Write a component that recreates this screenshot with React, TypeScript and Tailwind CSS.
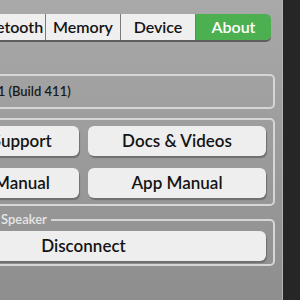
const tabs = ["Bluetooth", "Memory", "Device", "About"];

function Button({ label }: { label: string }) {
  return (
    <button className="flex-1 h-[30px] rounded-[6px] bg-[#eeeeee] text-[#141414] text-[17px] font-semibold shadow-[1px_2px_1px_#6e6e6e] flex items-center justify-center whitespace-nowrap">
      {label}
    </button>
  );
}

export default function App() {
  return (
    <div
      className="flex w-[300px] h-[300px] overflow-hidden"
      style={{ fontFamily: "Lato, 'Open Sans', sans-serif" }}
    >
      <div className="relative w-[283px] h-full overflow-hidden bg-gradient-to-b from-[#a9a9a9] to-[#8e8e8e] border-r border-[#b4b4b4]">
        {/* tab bar */}
        <div className="ml-[-29px] mt-[14px] w-[300px] h-[26px] flex rounded-[5px] shadow-[0_2px_0_#5e5e5e]">
          {tabs.map((t, i) => (
            <div
              key={t}
              className={
                t === "About"
                  ? "w-[75px] flex items-center justify-center bg-[#4caf50] text-white text-[16px] font-semibold rounded-r-[5px] pb-[1px]"
                  : "w-[75px] flex items-center justify-center bg-[#efefef] text-[#141414] text-[16px] font-semibold border-r border-[#7a7a7a] pb-[1px]" +
                    (i === 0 ? " rounded-l-[5px]" : "")
              }
            >
              {t}
            </div>
          ))}
        </div>

        <div className="ml-[-108px] w-[383px] flex flex-col">
          {/* version */}
          <div className="mt-[34px] h-[35px] rounded-[5px] border-2 border-[#d6d6d6] flex items-center pl-[36px] text-[13px] text-[#1a1a1a] font-semibold">
            Version 1.3.1 (Build 411)
          </div>

          {/* links */}
          <div className="mt-[9px] h-[88px] rounded-[5px] border-2 border-[#d6d6d6] px-[7px] pt-[6px] flex flex-col gap-[12px]">
            <div className="flex gap-[9px]">
              <Button label="Contact Support" />
              <Button label="Docs & Videos" />
            </div>
            <div className="flex gap-[9px]">
              <Button label="Speaker Manual" />
              <Button label="App Manual" />
            </div>
          </div>

          {/* speaker */}
          <fieldset className="mt-[4px] h-[56px] rounded-[5px] border-2 border-[#d6d6d6] px-[7px] pb-[5px] flex flex-col">
            <legend className="ml-[96px] px-[4px] text-[13px] text-[#e6e6e6] font-semibold">
              Speaker
            </legend>
            <div className="flex mt-[1px]">
              <Button label="Disconnect" />
            </div>
          </fieldset>
        </div>
      </div>
      <div className="flex-1 bg-[#262626]" />
    </div>
  );
}
